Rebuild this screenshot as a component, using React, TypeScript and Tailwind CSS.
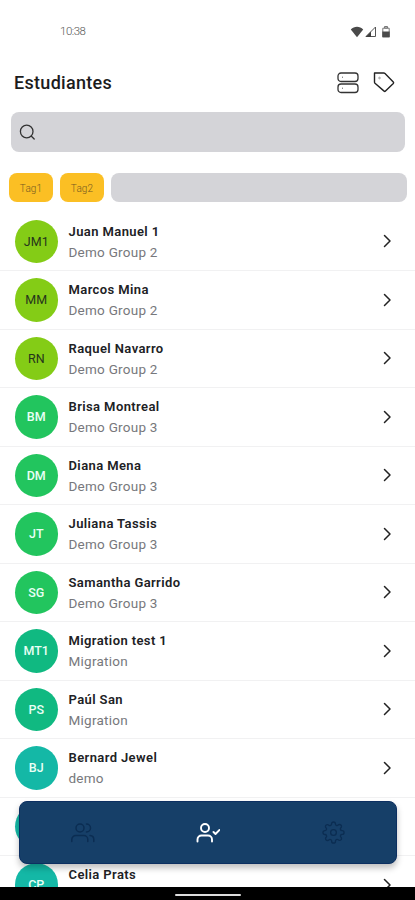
import React from 'react';
import { FiSettings } from 'react-icons/fi';

type Student = { initials: string; name: string; group: string; color: string; dark?: boolean };

const students: Student[] = [
  { initials: 'JM1', name: 'Juan Manuel 1', group: 'Demo Group 2', color: 'bg-[#84cc16]', dark: true },
  { initials: 'MM', name: 'Marcos Mina', group: 'Demo Group 2', color: 'bg-[#84cc16]', dark: true },
  { initials: 'RN', name: 'Raquel Navarro', group: 'Demo Group 2', color: 'bg-[#84cc16]', dark: true },
  { initials: 'BM', name: 'Brisa Montreal', group: 'Demo Group 3', color: 'bg-[#22c55e]' },
  { initials: 'DM', name: 'Diana Mena', group: 'Demo Group 3', color: 'bg-[#22c55e]' },
  { initials: 'JT', name: 'Juliana Tassis', group: 'Demo Group 3', color: 'bg-[#22c55e]' },
  { initials: 'SG', name: 'Samantha Garrido', group: 'Demo Group 3', color: 'bg-[#22c55e]' },
  { initials: 'MT1', name: 'Migration test 1', group: 'Migration', color: 'bg-[#10b981]' },
  { initials: 'PS', name: 'Paúl San', group: 'Migration', color: 'bg-[#10b981]' },
  { initials: 'BJ', name: 'Bernard Jewel', group: 'demo', color: 'bg-[#14b8a6]' },
  { initials: '', name: '', group: '', color: 'bg-[#14b8a6]' },
  { initials: 'CP', name: 'Celia Prats', group: '', color: 'bg-[#14b8a6]' },
];

function StatusIcons() {
  return (
    <svg className="ml-auto mr-[23px] h-4 w-[42px]" viewBox="0 0 42 16">
      <path d="M.8 5.4C4.2 1.7 9.8 1.7 13.2 5.4L7 13.3z" fill="#4a4a4a" />
      <path d="M16 12.5 25.5 3v9.5z" fill="none" stroke="#555" strokeWidth="1" />
      <path d="M15.500 13 21 7.500V13z" fill="#3f3f3f" />
      <path d="M32.800 4.200h6.400v8.600h-6.400zM34.500 2.500h3v1.500h-3z" fill="none" stroke="#777" strokeWidth="1" />
      <path d="M32.300 7.500h7.400V13.300h-7.400z" fill="#4a4a4a" />
    </svg>
  );
}

function Row({ s }: { s: Student }) {
  return (
    <li className="flex h-[58.5px] shrink-0 items-center border-b border-[#f1f1f2] pl-[14.5px] pr-[21.5px]">
      <div
        className={`flex size-[43.500px] shrink-0 items-center justify-center rounded-full pt-[2px] text-[12.500px] ${s.color} ${s.dark ? 'text-[#26351c]' : 'font-medium text-[#e9fff5]'}`}
      >
        {s.initials}
      </div>
      <div className="ml-[10.500px] h-[43px] flex-1 whitespace-nowrap">
        <div className="h-[21px] text-[13px] font-semibold leading-[23px] tracking-[0.4px] text-[#202124]">{s.name}</div>
        <div className="h-[21px] text-[13.500px] leading-[23px] tracking-[0.25px] text-[#77787c]">{s.group}</div>
      </div>
      <svg className="h-4 w-3" viewBox="0 0 12 16" fill="none" stroke="#222" strokeWidth="1.5" strokeLinecap="round" strokeLinejoin="round">
        <path d="m2.500 2.500 5.500 5.500-5.500 5.500" />
      </svg>
    </li>
  );
}

export default function App() {
  return (
    <main className="relative flex h-[900px] w-[415px] flex-col overflow-hidden bg-white font-['Roboto',sans-serif]">
      <div className="flex h-[62px] shrink-0 items-center pl-[60px] pt-[1px]">
        <span className="text-[11.500px] font-light tracking-[-0.5px] text-[#555]">10:38</span>
        <StatusIcons />
      </div>
      <header className="flex h-[50px] shrink-0 items-start pl-[14px] pr-[19px]">
        <h1 className="mt-[7px] text-[18px] font-medium leading-[27px] tracking-[0.3px] text-[#1c1c1c]">Estudiantes</h1>
        <svg className="ml-auto mt-[9px] h-6 w-6" viewBox="0 0 24 24" fill="none" stroke="#333" strokeWidth="1.300">
          <rect x="2" y="2" width="20" height="8.500" rx="3" />
          <rect x="2" y="13" width="20" height="8.500" rx="3" />
          <path d="M6 6.200h.8M6 17.200h.8" strokeWidth="1" />
        </svg>
        <svg className="ml-[12px] mt-[9px] h-6 w-6" viewBox="0 0 24 24" fill="none" stroke="#222" strokeWidth="1.400" strokeLinejoin="round">
          <path d="M2.500 2h9.200c.5 0 1 .2 1.300.5l8.300 8.600a1 1 0 0 1 0 1.400l-7.800 7.600a1 1 0 0 1-1.400 0L3 12.300a2 2 0 0 1-.5-1.300z" />
          <circle cx="7.500" cy="7" r=".8" stroke="#999" strokeWidth="1" />
        </svg>
      </header>
      <div className="ml-[11px] flex h-[39.500px] w-[394px] shrink-0 items-center rounded-[8px] bg-[#d4d4d8] pl-[8px]">
        <svg className="h-4 w-4" viewBox="0 0 16 16" fill="none" stroke="#333" strokeWidth="1.300" strokeLinecap="round">
          <circle cx="7.700" cy="7.500" r="6.300" />
          <path d="m12.400 12.200 2.800 2.800" />
        </svg>
      </div>
      <div className="mt-[21px] flex h-[40px] shrink-0 pl-[9px]">
        <div className="flex h-[29px] w-[44px] items-center justify-center rounded-[8px] bg-[#fbbf24] pt-[2px] text-[10px] font-light tracking-[0.1px] text-[#765a22]">Tag1</div>
        <div className="ml-[7px] flex h-[29px] w-[44px] items-center justify-center rounded-[8px] bg-[#fbbf24] pt-[2px] text-[10px] font-light tracking-[0.1px] text-[#765a22]">Tag2</div>
        <div className="ml-[7px] h-[29px] w-[296px] rounded-[8px] bg-[#d4d4d8]" />
      </div>
      <ul className="flex h-[674px] shrink-0 flex-col overflow-hidden">
        {students.map((s, i) => (
          <Row key={i} s={s} />
        ))}
      </ul>
      <div className="flex flex-1 items-start justify-center bg-black pt-[7px]">
        <div className="h-[2px] w-[66px] rounded-full bg-[#dedede]" />
      </div>
      <nav className="absolute left-[19px] top-[801px] grid h-[63px] w-[378px] grid-cols-3 place-items-center rounded-[8px] border border-[#0c2f61] bg-[#163f68] shadow-[0_4px_6px_rgba(0,0,0,0.25)]">
        <svg className="h-6 w-6" viewBox="0 0 24 24" fill="none" stroke="#0b2d52" strokeWidth="1.500" strokeLinecap="round" strokeLinejoin="round">
          <circle cx="9" cy="7" r="4" />
          <path d="M.8 20.500v-2a4 4 0 0 1 4-4h8a4 4 0 0 1 4 4v2M15.500 3a4 4 0 0 1 0 8M19 14.500a4 4 0 0 1 3.800 4v2" />
        </svg>
        <svg className="h-6 w-6" viewBox="0 0 24 24" fill="none" stroke="#fff" strokeWidth="1.900" strokeLinecap="round" strokeLinejoin="round">
          <circle cx="9" cy="7" r="4" />
          <path d="M1.500 20.500v-2a4 4 0 0 1 4-4H12a4 4 0 0 1 4 4v2M17.500 11l2 2 4-4" />
        </svg>
        <FiSettings className="size-[23px]" color="#0b2d52" strokeWidth={1.4} />
      </nav>
    </main>
  );
}
